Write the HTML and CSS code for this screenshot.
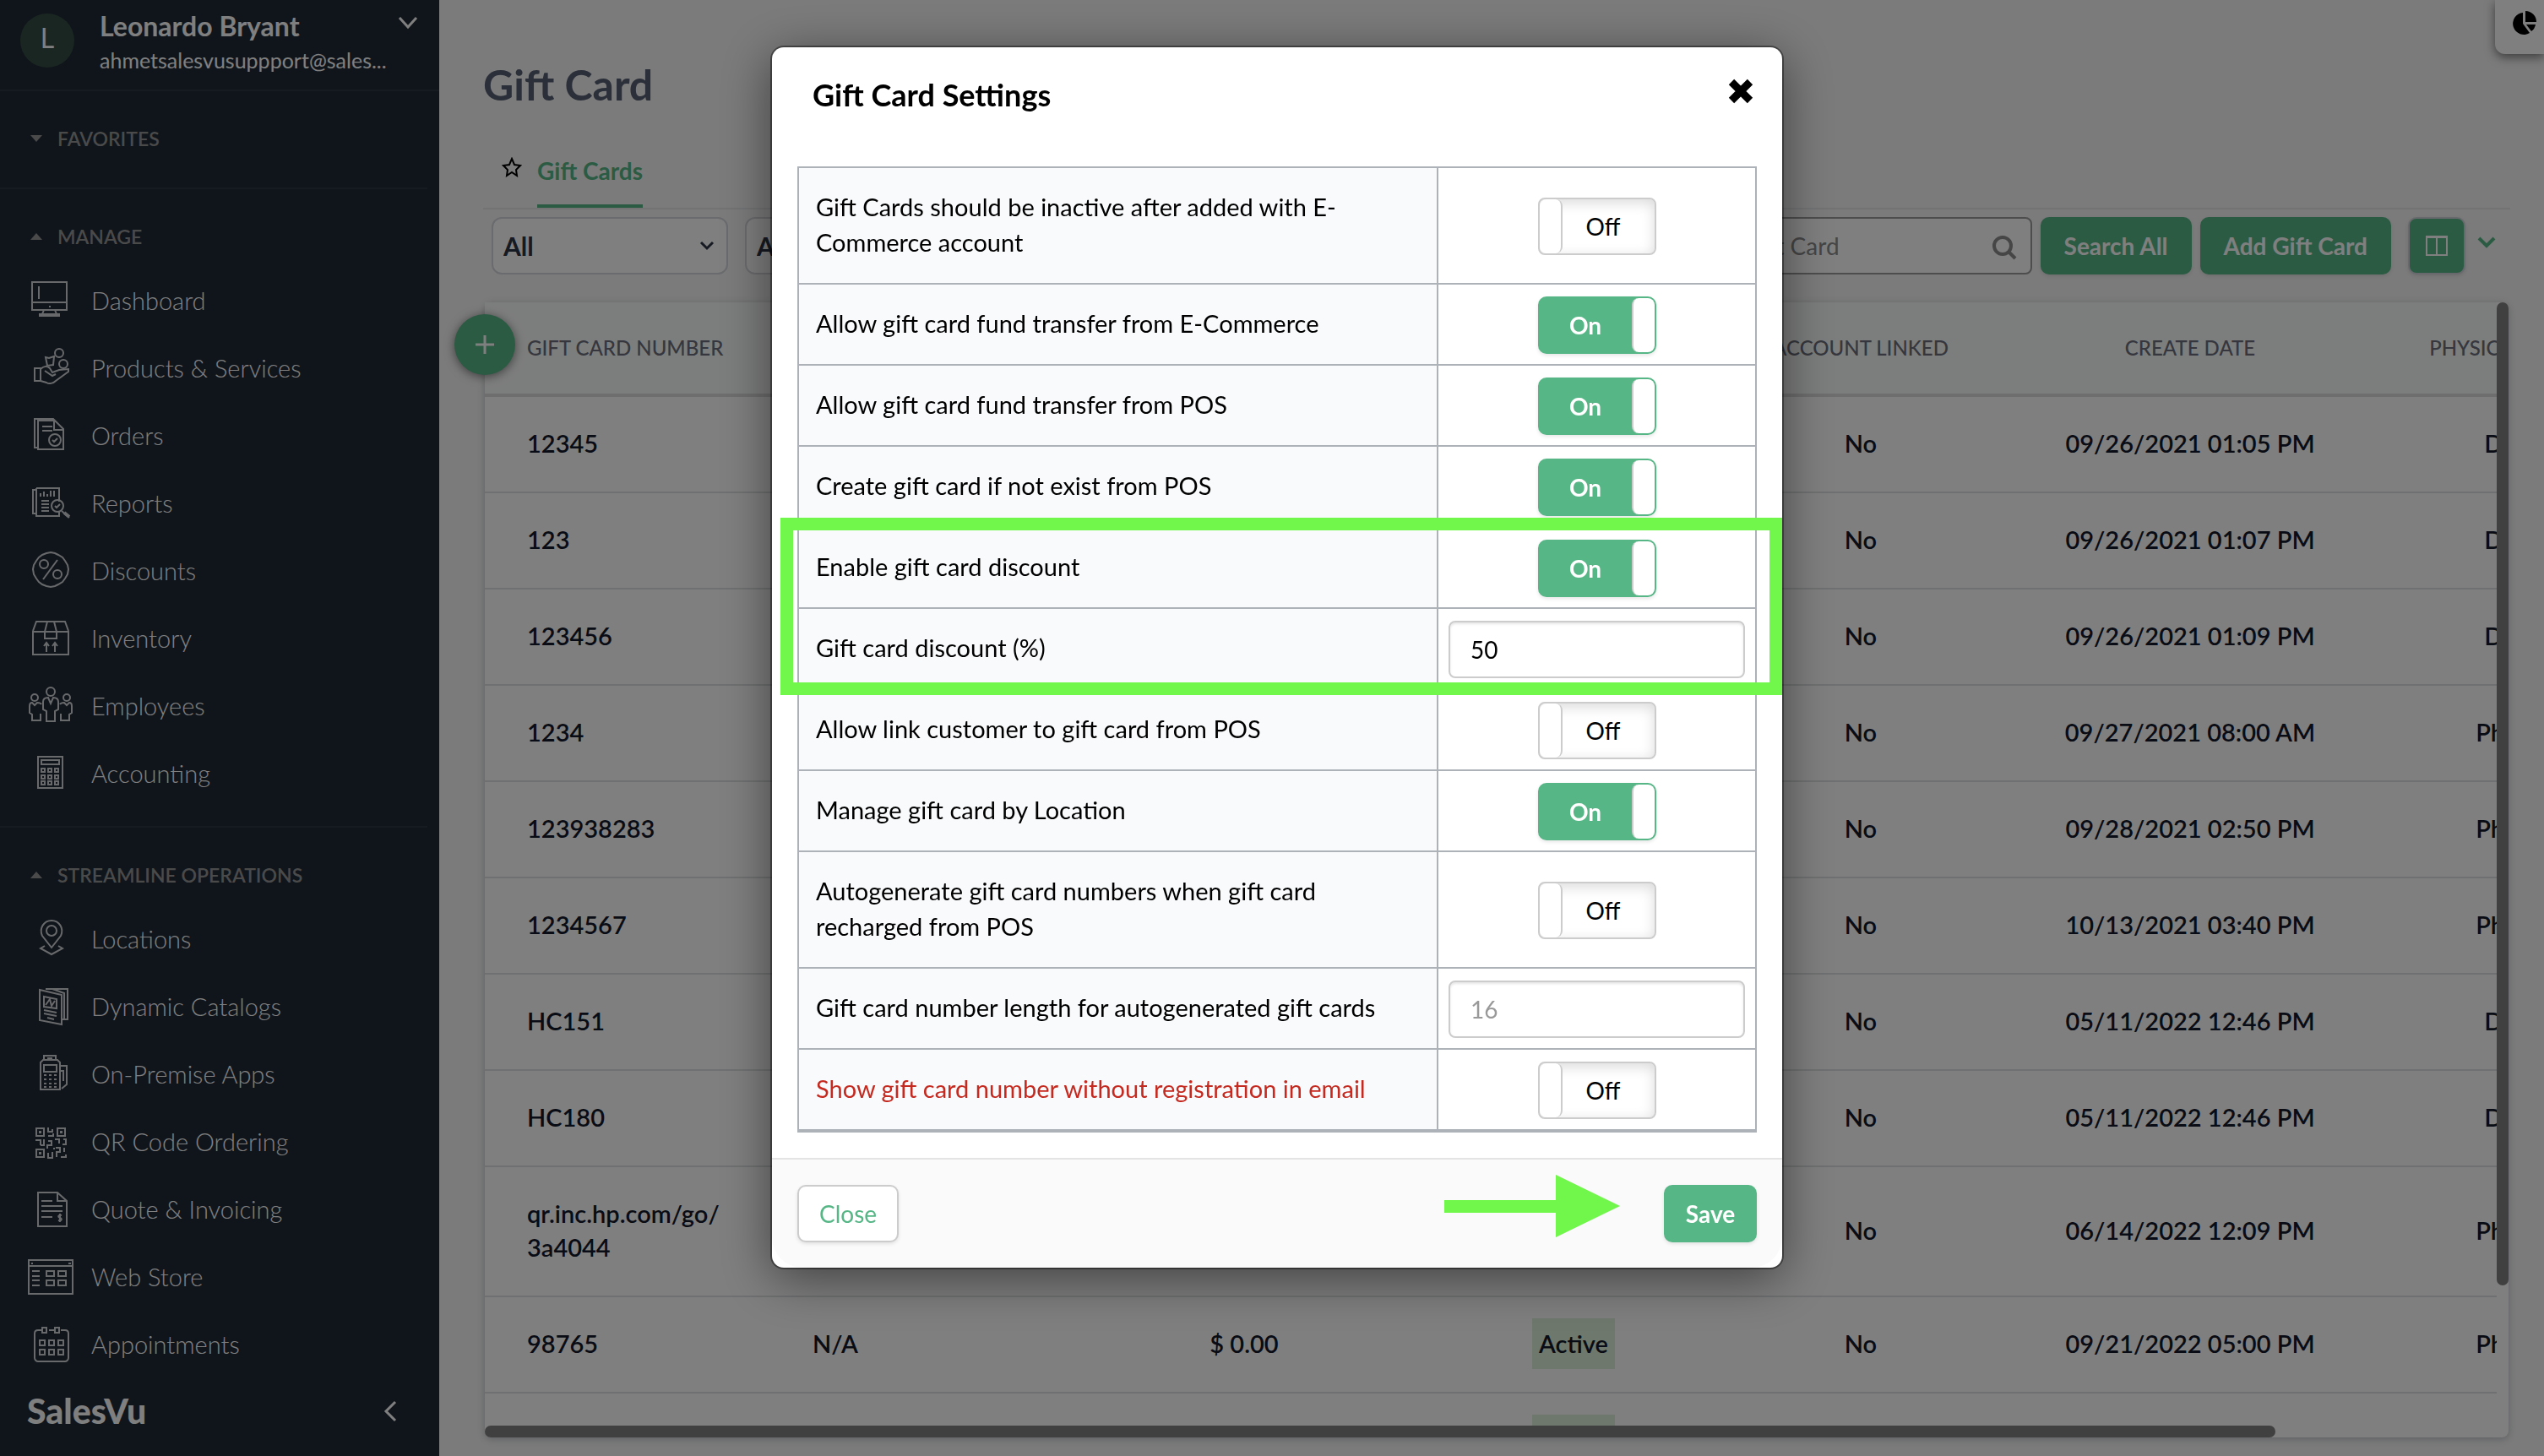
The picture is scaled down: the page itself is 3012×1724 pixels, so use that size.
FILE: index.html
```html
<!DOCTYPE html>
<html lang="en">
<head>
    <meta charset="UTF-8">
    <meta name="viewport" content="width=device-width, initial-scale=1.0">
    <title>Gift Card - SalesVu</title>
    <link rel="stylesheet" href="styles.css">
</head>
<body>
    <div class="app">
        <aside class="sidebar">
            <div class="profile">
                <span class="avatar">L</span>
                <div class="profile-text">
                    <strong>Leonardo Bryant</strong>
                    <span class="email">ahmetsalesvusuppport@sales...</span>
                </div>
                <svg class="profile-arrow" width="24" height="16" viewBox="0 0 24 16"><path d="M2 2l10 11L22 2"/></svg>
            </div>

            <nav class="menu">
                <section>
                    <h2><svg width="14" height="10" viewBox="0 0 14 10"><path d="M0 1h14L7 9z"/></svg>FAVORITES</h2>
                </section>
                <section>
                    <h2><svg width="14" height="10" viewBox="0 0 14 10"><path d="M0 9h14L7 1z"/></svg>MANAGE</h2>
                    <a href="#"><svg viewBox="0 0 56 56"><path d="M6 6h41v33H6zM6 30h41M14 11v15M26 35h2M20 39l-2 5M33 39l2 5"/><path d="M14 45h25" stroke-width="4"/></svg>Dashboard</a>
                    <a href="#"><svg viewBox="0 0 56 56"><circle cx="38" cy="10" r="5"/><circle cx="43" cy="23" r="5"/><path d="M22 15l4 1 6-2-1 10-7 1zM9 28h7v15H9zM16 29c4-4 8-4 11-1l3 5 8-3 11-1v3L34 43c-3 3-8 4-11 2l-7-2M21 31l9 6 4-2"/></svg>Products &amp; Services</a>
                    <a href="#"><svg viewBox="0 0 56 56"><path d="M12 42H9V8h22l2 2M13 10h20l10 10v24H13zM32 10v11h11M18 17h12M18 22h12"/><circle cx="33" cy="33" r="7"/><path d="M30 33l2 2 4-4"/></svg>Orders</a>
                    <a href="#"><svg viewBox="0 0 56 56"><path d="M11 12H7v28h5M11 10h27v16M38 37v6H11V10M16 20v-4M20 20v-6M24 20v-3M28 20v-7M32 20v-7M17 25h9M17 29h9M17 33h9M17 37h9"/><circle cx="36" cy="31" r="7"/><path d="M33 31l2 2 4-4M41 37l9 8" /><path d="M44 39l6 5" stroke-width="4"/></svg>Reports</a>
                    <a href="#"><svg viewBox="0 0 56 56"><path d="M28 6l5 1 4 2 5 3 3 4 3 5 1 5-1 6-3 5-3 4-5 3-4 2-5 1-5-1-5-2-4-3-3-4-3-5-1-6 1-5 3-5 3-4 4-3 5-2z"/><circle cx="20" cy="20" r="5"/><circle cx="36" cy="32" r="5"/><path d="M36 15L19 38"/></svg>Discounts</a>
                    <a href="#"><svg viewBox="0 0 56 56"><path d="M7 20h42v27H7zM7 19l4-11h34l4 11M24 8l-3 12v8h14v-8L32 8M23 44V34M20 37l3-4 3 4M33 44V34M30 37l3-4 3 4"/></svg>Inventory</a>
                    <a href="#"><svg viewBox="0 0 56 56"><circle cx="28" cy="11" r="5"/><circle cx="9" cy="18" r="4"/><circle cx="47" cy="18" r="4"/><path d="M23 46V34l-4-2V23c0-4 3-5 6-5l3 7 3-7c3 0 6 1 6 5v9l-4 2v12zM17 26c-1-2-3-2-5-2l-3 3-3-3c-2 0-3 2-3 4v8l3 2v7h10v-8M39 26c1-2 3-2 5-2l3 3 3-3c2 0 3 2 3 4v8l-3 2v7H40v-8"/></svg>Employees</a>
                    <a href="#"><svg viewBox="0 0 56 56"><path d="M13 8h29v37H13zM17 12h21v5H17zM17 22h4v4h-4zM25 22h4v4h-4zM33 22h4v4h-4zM17 30h4v4h-4zM25 30h4v4h-4zM33 30h4v4h-4zM17 37h4v4h-4zM25 37h4v4h-4zM33 37h4v4h-4z"/></svg>Accounting</a>
                </section>
                <section>
                    <h2><svg width="14" height="10" viewBox="0 0 14 10"><path d="M0 9h14L7 1z"/></svg>STREAMLINE OPERATIONS</h2>
                    <a href="#"><svg viewBox="0 0 56 56"><path d="M29 38L18 24c-4-9 2-18 11-18s15 9 11 18zM21 36l-5 3 13 7 13-7-5-3"/><circle cx="29" cy="18" r="6"/></svg>Locations</a>
                    <a href="#"><svg viewBox="0 0 56 56"><path d="M15 8l26 6v35l-26-5zM22 7h26v36h-7M30 7l14 5v30M20 16l15 3v11l-15-2zM22 26l5-7 2 8 4-6M20 32l15 3M20 36l15 3M24 41l8 2" /></svg>Dynamic Catalogs</a>
                    <a href="#"><svg viewBox="0 0 56 56"><path d="M20 12V6h14v6M24 9h6M16 46V14l3-3h17l3 3v32zM20 17h15v8H20zM39 18h8v22l-6 5M39 24h4v12M20 29h3M26 29h3M32 29h3M20 34h3M26 34h3M32 34h3M20 39h3M26 39h3M32 39h3M20 43h3M26 43h3M32 43h3"/></svg>On-Premise Apps</a>
                    <a href="#"><svg viewBox="0 0 56 56"><path d="M11 12h9v9h-9zM36 12h9v9h-9zM11 37h9v9h-9zM15 16h1v1h-1zM40 16h1v1h-1zM15 41h1v1h-1zM25 11v5h5v-3M25 21h6v-3M10 26h6v6M20 25v7h-4M25 27h4v5h-5v4M33 25h5v5M43 25h3v6h-4M25 41v6h5v-7M34 35h5v5h-4v6M44 35v5M40 46h6v-3M31 36h2"/></svg>QR Code Ordering</a>
                    <a href="#"><svg viewBox="0 0 56 56"><path d="M13 8h23l11 10v30H13zM36 8v10h11M17 18h13M17 24h25M17 30h25M17 37h13M41 35c-4-1-5 2-2 3s2 4-2 3M39 33v10"/></svg>Quote &amp; Invoicing</a>
                    <a href="#"><svg viewBox="0 0 56 56"><path d="M2 8h52v40H2zM2 15h52M5 12h2M49 12h3M6 21h9M6 27h9M6 32h9M6 38h9M23 21h9v6h-9zM37 21h9v6h-9zM23 32h9v6h-9zM37 32h9v6h-9z"/></svg>Web Store</a>
                    <a href="#"><svg viewBox="0 0 56 56"><path d="M18 11h-5c-2 0-4 1-4 4v29c0 2 2 4 4 4h32c2 0 4-2 4-4V15c0-3-2-4-4-4h-5M26 11h6M18 8h5v6h-5zM33 8h5v6h-5zM15 23h6v6h-6zM26 23h6v6h-6zM37 23h6v6h-6zM15 34h6v6h-6zM26 34h6v6h-6zM37 34h6v6h-6z"/></svg>Appointments</a>
                </section>
            </nav>

            <div class="sidebar-footer">
                <span class="logo">SalesVu</span>
                <svg width="16" height="26" viewBox="0 0 16 26"><path d="M14 2L3 13l11 11"/></svg>
            </div>
        </aside>

        <main class="content">
            <h1>Gift Card</h1>
            <div class="tabs">
                <svg width="24" height="24" viewBox="0 0 24 24"><path d="M12 2l3 7 7 1-5 5 1 7-6-4-6 4 1-7-5-5 7-1z"/></svg>
                <a href="#" class="tab">Gift Cards</a>
            </div>

            <div class="toolbar">
                <div class="select">
                    <select aria-label="Type"><option>All</option></select>
                    <svg width="18" height="12" viewBox="0 0 18 12"><path d="M2 2l7 7 7-7"/></svg>
                </div>
                <div class="select">
                    <select aria-label="Status"><option>All</option></select>
                    <svg width="18" height="12" viewBox="0 0 18 12"><path d="M2 2l7 7 7-7"/></svg>
                </div>
                <div class="search">
                    <input type="text" aria-label="Search" placeholder="Gift Card">
                    <svg width="30" height="30" viewBox="0 0 30 30"><circle cx="13" cy="13" r="10"/><path d="M20 20l8 8"/></svg>
                </div>
                <button class="btn btn-green">Search All</button>
                <button class="btn btn-green">Add Gift Card</button>
                <button class="btn btn-green btn-columns" aria-label="Columns">
                    <svg width="28" height="26" viewBox="0 0 28 26"><path d="M2 2h24v22H2zM2 3h24M14 3v21"/></svg>
                </button>
                <svg class="more" width="22" height="16" viewBox="0 0 22 16"><path d="M2 3l9 9 9-9"/></svg>
            </div>

            <div class="grid-card">
                <div class="grid-view">
                    <table class="grid">
                        <colgroup>
                            <col class="c-number"><col class="c-customer"><col class="c-balance"><col class="c-status"><col class="c-date"><col class="c-date"><col class="c-date">
                        </colgroup>
                        <thead>
                            <tr><th>GIFT CARD NUMBER</th><th></th><th></th><th></th><th>ACCOUNT LINKED</th><th>CREATE DATE</th><th>PHYSICAL/DIGITAL</th></tr>
                        </thead>
                        <tbody>
                            <tr><td>12345</td><td></td><td></td><td></td><td>No</td><td>09/26/2021 01:05 PM</td><td>Digital</td></tr>
                            <tr><td>123</td><td></td><td></td><td></td><td>No</td><td>09/26/2021 01:07 PM</td><td>Digital</td></tr>
                            <tr><td>123456</td><td></td><td></td><td></td><td>No</td><td>09/26/2021 01:09 PM</td><td>Digital</td></tr>
                            <tr><td>1234</td><td></td><td></td><td></td><td>No</td><td>09/27/2021 08:00 AM</td><td>Physical</td></tr>
                            <tr><td>123938283</td><td></td><td></td><td></td><td>No</td><td>09/28/2021 02:50 PM</td><td>Physical</td></tr>
                            <tr><td>1234567</td><td></td><td></td><td></td><td>No</td><td>10/13/2021 03:40 PM</td><td>Physical</td></tr>
                            <tr><td>HC151</td><td></td><td></td><td></td><td>No</td><td>05/11/2022 12:46 PM</td><td>Digital</td></tr>
                            <tr><td>HC180</td><td></td><td></td><td></td><td>No</td><td>05/11/2022 12:46 PM</td><td>Digital</td></tr>
                            <tr><td>qr.inc.hp.com/go/<br>3a4044</td><td></td><td></td><td></td><td>No</td><td>06/14/2022 12:09 PM</td><td>Physical</td></tr>
                            <tr><td>98765</td><td>N/A</td><td>$ 0.00</td><td><span class="badge">Active</span></td><td>No</td><td>09/21/2022 05:00 PM</td><td>Physical</td></tr>
                            <tr><td></td><td></td><td></td><td><span class="badge">Active</span></td><td></td><td></td><td></td></tr>
                        </tbody>
                    </table>
                </div>
                <div class="track-y"><div class="thumb"></div></div>
                <div class="track-x"><div class="thumb"></div></div>
                <button class="fab" aria-label="Add">
                    <svg width="24" height="24" viewBox="0 0 24 24"><path d="M12 1v22M1 12h22"/></svg>
                </button>
            </div>
        </main>

        <div class="corner">
            <svg width="32" height="32" viewBox="0 0 32 32"><path d="M14 3a13 13 0 1 0 8 24L14 16zM17 1v13h13A13 13 0 0 0 17 1zM18 17l6 8a12 12 0 0 0 5-8z"/></svg>
        </div>
    </div>

    <div class="backdrop">
        <div class="modal" role="dialog" aria-label="Gift Card Settings">
            <div class="modal-header">
                <h3>Gift Card Settings</h3>
                <button class="close" aria-label="Close">
                    <svg width="30" height="30" viewBox="0 0 30 30"><path d="M4 4l22 22M26 4L4 26"/></svg>
                </button>
            </div>

            <div class="modal-body">
                <table class="settings">
                    <tr>
                        <th><label for="inactive">Gift Cards should be inactive after added with E-Commerce account</label></th>
                        <td><span class="switch"><input type="checkbox" id="inactive"><span>Off</span><i></i></span></td>
                    </tr>
                    <tr>
                        <th><label for="transfer-web">Allow gift card fund transfer from E-Commerce</label></th>
                        <td><span class="switch on"><input type="checkbox" id="transfer-web" checked><span>On</span><i></i></span></td>
                    </tr>
                    <tr>
                        <th><label for="transfer-pos">Allow gift card fund transfer from POS</label></th>
                        <td><span class="switch on"><input type="checkbox" id="transfer-pos" checked><span>On</span><i></i></span></td>
                    </tr>
                    <tr>
                        <th><label for="create-pos">Create gift card if not exist from POS</label></th>
                        <td><span class="switch on"><input type="checkbox" id="create-pos" checked><span>On</span><i></i></span></td>
                    </tr>
                    <tr>
                        <th><label for="discount-on">Enable gift card discount</label></th>
                        <td><span class="switch on"><input type="checkbox" id="discount-on" checked><span>On</span><i></i></span></td>
                    </tr>
                    <tr>
                        <th><label for="discount">Gift card discount (%)</label></th>
                        <td><input class="field" type="text" id="discount" value="50"></td>
                    </tr>
                    <tr>
                        <th><label for="link">Allow link customer to gift card from POS</label></th>
                        <td><span class="switch"><input type="checkbox" id="link"><span>Off</span><i></i></span></td>
                    </tr>
                    <tr>
                        <th><label for="location">Manage gift card by Location</label></th>
                        <td><span class="switch on"><input type="checkbox" id="location" checked><span>On</span><i></i></span></td>
                    </tr>
                    <tr>
                        <th><label for="autogen">Autogenerate gift card numbers when gift card recharged from POS</label></th>
                        <td><span class="switch"><input type="checkbox" id="autogen"><span>Off</span><i></i></span></td>
                    </tr>
                    <tr>
                        <th><label for="length">Gift card number length for autogenerated gift cards</label></th>
                        <td><input class="field" type="text" id="length" placeholder="16"></td>
                    </tr>
                    <tr class="warning">
                        <th><label for="email">Show gift card number without registration in email</label></th>
                        <td><span class="switch"><input type="checkbox" id="email"><span>Off</span><i></i></span></td>
                    </tr>
                </table>
            </div>

            <div class="modal-footer">
                <button class="btn btn-plain">Close</button>
                <button class="btn btn-green btn-save">Save</button>
            </div>

            <!-- highlights over the discount rows and the save button -->
            <div class="mark-box"></div>
            <svg class="mark-arrow" width="208" height="74" viewBox="0 0 208 74"><path d="M0 30h132V0l76 37-76 37V45H0z"/></svg>
        </div>
    </div>
</body>
</html>
```
FILE: styles.css
```css
* {
    box-sizing: border-box;
}
body {
    margin: 0;
    font-family: Lato, "Open Sans", sans-serif;
    font-size: 28px;
    line-height: 40px;
    color: #12182a;
    background-color: #f6f6f6;
}
button, input, select {
    font-family: inherit;
    font-size: inherit;
}
a {
    text-decoration: none;
}
svg {
    flex: none;
    fill: none;
    stroke: currentColor;
    stroke-width: 2;
}
.app {
    display: flex;
    height: 100vh;
    overflow: hidden;
}

/* sidebar */
.sidebar {
    flex: none;
    display: flex;
    flex-direction: column;
    width: 520px;
    background-color: #202a38;
    color: #fff;
}
.profile {
    display: flex;
    height: 108px;
    padding: 11px 25px 0 24px;
    border-bottom: 2px solid #2c3542;
}
.avatar {
    width: 64px;
    height: 64px;
    margin-top: 5px;
    border-radius: 50%;
    background-color: #354c42;
    font-size: 32px;
    line-height: 58px;
    text-align: center;
}
.profile-text {
    flex: 1;
    margin-left: 30px;
}
.profile-text strong {
    display: block;
    font-size: 32px;
    line-height: 40px;
}
.email {
    display: block;
    font-size: 25px;
    line-height: 40px;
}
.profile-arrow {
    margin-top: 8px;
    stroke-width: 3;
}
.menu {
    flex: 1;
    overflow: hidden;
}
.menu section {
    width: 506px;
    padding: 36px 0 21px;
    border-bottom: 2px solid #2c3542;
}
.menu section:last-child {
    padding-bottom: 0;
    border-bottom: none;
}
.menu h2 {
    display: flex;
    align-items: center;
    gap: 18px;
    margin: 0 0 17px;
    padding-left: 36px;
    font-size: 23px;
    font-weight: 600;
    line-height: 40px;
    color: #949494;
}
.menu h2 svg {
    fill: currentColor;
    stroke: none;
}
.menu a {
    display: flex;
    align-items: center;
    gap: 20px;
    height: 80px;
    padding: 0 0 2px 32px;
    font-size: 29px;
    font-weight: 300;
    color: #fff;
}
.menu a svg {
    width: 56px;
    height: 56px;
    color: #d0d2d5;
}
.sidebar-footer {
    display: flex;
    align-items: center;
    justify-content: space-between;
    height: 91px;
    padding: 0 50px 16px 32px;
}
.sidebar-footer svg {
    stroke-width: 3;
}
.logo {
    font-size: 41px;
    font-weight: 900;
}

/* page */
.content {
    flex: 1;
    display: flex;
    flex-direction: column;
    min-width: 0;
    padding: 70px 40px 22px 52px;
}
h1 {
    margin: 0;
    font-size: 50px;
    line-height: 60px;
    color: #565e72;
}
.tabs {
    display: flex;
    gap: 18px;
    height: 118px;
    padding: 50px 0 0 22px;
    border-bottom: 2px solid #e6e7e9;
}
.tabs svg {
    margin-top: 6px;
    color: #000;
}
.tab {
    height: 66px;
    padding-top: 2px;
    border-bottom: 4px solid #56b686;
    font-weight: 700;
    color: #56b686;
}
.toolbar {
    display: flex;
    align-items: center;
    height: 110px;
    padding: 0 17px 24px 10px;
    gap: 10px;
}
.select {
    position: relative;
    width: 280px;
    margin-right: 10px;
}
.select select {
    width: 100%;
    height: 68px;
    padding: 0 12px;
    border: 2px solid #d5d6dc;
    border-radius: 12px;
    appearance: none;
    background-color: #fff;
    font-size: 30px;
    font-weight: 700;
    color: #2d3446;
}
.select svg {
    position: absolute;
    right: 16px;
    top: 28px;
    stroke-width: 3;
    color: #2d3446;
}
.search {
    position: relative;
    width: 520px;
    margin-left: auto;
}
.search input {
    width: 100%;
    height: 68px;
    padding: 0 226px 0 12px;
    border: 2px solid #9b9b9b;
    border-radius: 8px;
    background-color: #fff;
    text-align: right;
}
.search input::placeholder {
    color: #8c8c8c;
}
.search svg {
    position: absolute;
    right: 18px;
    top: 21px;
    stroke-width: 4;
    color: #8c8c8c;
}
.btn {
    height: 68px;
    padding: 0 24px;
    border: 2px solid #ccc;
    border-radius: 10px;
    box-shadow: 0 2px 4px rgba(0, 0, 0, 0.1);
    white-space: nowrap;
}
.btn-green {
    padding: 0 26px;
    border-color: #56b686;
    background-color: #56b686;
    font-weight: 700;
    color: #fff;
}
.btn-plain {
    background-color: #fff;
    color: #56b686;
}
.btn-columns {
    display: flex;
    align-items: center;
    width: 68px;
    margin-left: 10px;
    padding: 0 18px;
    border-color: #d0d3da;
}
.more {
    margin: 0 0 8px 4px;
    stroke-width: 4;
    color: #56b686;
}

/* gift card list */
.grid-card {
    position: relative;
    flex: 1;
    display: grid;
    grid-template-columns: 1fr 14px;
    grid-template-rows: 1fr 14px;
    min-height: 0;
    margin: 0 2px;
    border-radius: 8px;
    background-color: #fff;
    box-shadow: 0 2px 8px rgba(60, 70, 90, 0.3);
}
.grid-view {
    overflow: hidden;
}
.grid {
    width: 2604px;
    table-layout: fixed;
    border-collapse: collapse;
}
.c-number {
    width: 364px;
}
.c-customer {
    width: 290px;
}
.c-balance {
    width: 490px;
}
.c-status {
    width: 290px;
}
.c-date {
    width: 390px;
}
.grid th {
    height: 110px;
    padding: 0 24px;
    border-bottom: 4px solid #dcdcdc;
    background-color: #f9fcfa;
    font-size: 24px;
    font-weight: 500;
    color: #6c6f7c;
    white-space: nowrap;
}
.grid td {
    height: 114px;
    padding: 35px 24px 37px;
    border-bottom: 2px solid #dfe1e2;
    font-size: 29px;
    font-weight: 600;
    text-align: center;
}
.grid th:nth-child(1), .grid td:nth-child(1) {
    padding-left: 50px;
    padding-right: 0;
    text-align: left;
}
.grid th:nth-child(2), .grid td:nth-child(2) {
    text-align: left;
}
.badge {
    display: inline-block;
    height: 60px;
    margin: -10px 0;
    padding: 0 8px;
    background-color: #dff0d8;
    line-height: 60px;
}
.track-y .thumb {
    width: 14px;
    height: calc(100% - 166px);
    border-radius: 7px;
    background-color: #808080;
}
.track-x .thumb {
    width: 89%;
    height: 14px;
    border-radius: 7px;
    background-color: #808080;
}
.fab {
    position: absolute;
    left: -36px;
    top: 14px;
    display: flex;
    align-items: center;
    justify-content: center;
    width: 72px;
    height: 72px;
    border: none;
    border-radius: 50%;
    background-color: #56b686;
    box-shadow: 0 2px 12px rgba(0, 0, 0, 0.5);
    color: #fff;
}
.fab svg {
    stroke-width: 3;
}
.corner {
    position: absolute;
    right: 0;
    top: 0;
    width: 58px;
    height: 64px;
    padding: 12px 0 0 19px;
    border-bottom-left-radius: 12px;
    background-color: #fff;
    box-shadow: 0 4px 12px rgba(0, 0, 0, 0.5);
}
.corner svg {
    fill: #000;
    stroke: none;
}

/* modal */
.backdrop {
    position: fixed;
    inset: 0;
    display: flex;
    align-items: flex-start;
    justify-content: center;
    padding: 56px 0 0 12px;
    background-color: rgba(0, 0, 0, 0.5);
    color: #000;
}
.modal {
    position: relative;
    width: 1196px;
    border-radius: 14px;
    background-color: #fff;
    box-shadow: 0 0 0 2px rgba(0, 0, 0, 0.4), 0 12px 60px rgba(0, 0, 0, 0.5);
}
.modal-header {
    display: flex;
    align-items: center;
    justify-content: space-between;
    height: 111px;
    padding: 0 34px 0 48px;
}
.modal-header h3 {
    margin: 0;
    font-size: 36px;
}
.close {
    display: flex;
    margin-bottom: 8px;
    padding: 0;
    border: none;
    background: none;
}
.close svg {
    stroke: #000;
    stroke-width: 9;
}
.modal-body {
    padding: 30px;
}
.settings {
    width: 100%;
    table-layout: fixed;
    border-collapse: collapse;
}
.settings th, .settings td {
    border: 2px solid #adb1b8;
}
.settings tr:last-child th, .settings tr:last-child td {
    border-bottom-width: 4px;
}
.settings th {
    width: 757px;
    padding: 25px 20px 27px;
    background-color: #f9fafc;
    font-size: 29px;
    font-weight: 400;
    line-height: 42px;
    text-align: left;
}
.settings td {
    padding: 14px 12px 12px;
    text-align: center;
}
.settings .warning th {
    color: #c52a20;
}
.switch {
    position: relative;
    display: flex;
    width: 140px;
    height: 68px;
    margin: 0 auto;
    border: 2px solid #ccc;
    border-radius: 8px;
    background-color: #fff;
    box-shadow: inset 0 4px 16px rgba(0, 0, 0, 0.15);
}
.switch input {
    position: absolute;
    inset: 0;
    width: 100%;
    height: 100%;
    margin: 0;
    opacity: 0;
}
.switch span {
    flex: 1;
    order: 2;
    padding-right: 12px;
    line-height: 64px;
}
.switch i {
    width: 27px;
    border-right: 2px solid #ccc;
    border-radius: 8px;
    background-color: #fff;
}
.switch.on {
    border-color: #56b686;
    border-radius: 10px;
    background-color: #56b686;
    box-shadow: 0 2px 4px rgba(0, 0, 0, 0.1);
    font-weight: 700;
    color: #fff;
}
.switch.on span {
    order: 0;
    padding-right: 0;
}
.switch.on i {
    border-right: none;
    border-left: 2px solid #ccc;
}
.field {
    display: block;
    width: 100%;
    height: 68px;
    padding: 0 24px;
    border: 2px solid #ccc;
    border-radius: 8px;
    box-shadow: inset 0 2px 3px rgba(0, 0, 0, 0.1);
    color: #000;
}
.field::placeholder {
    color: #999;
}
.modal-footer {
    display: flex;
    justify-content: space-between;
    padding: 30px;
    border-top: 2px solid #e4e4e4;
    border-radius: 0 0 36px 36px;
    background-color: #fafafa;
}
.btn-save {
    width: 110px;
    padding: 0;
}
.mark-box {
    position: absolute;
    left: 10px;
    right: 0;
    top: 557px;
    height: 210px;
    border: 15px solid #71f64b;
}
.mark-arrow {
    position: absolute;
    right: 192px;
    bottom: 36px;
    fill: #71f64b;
    stroke: none;
}
```
